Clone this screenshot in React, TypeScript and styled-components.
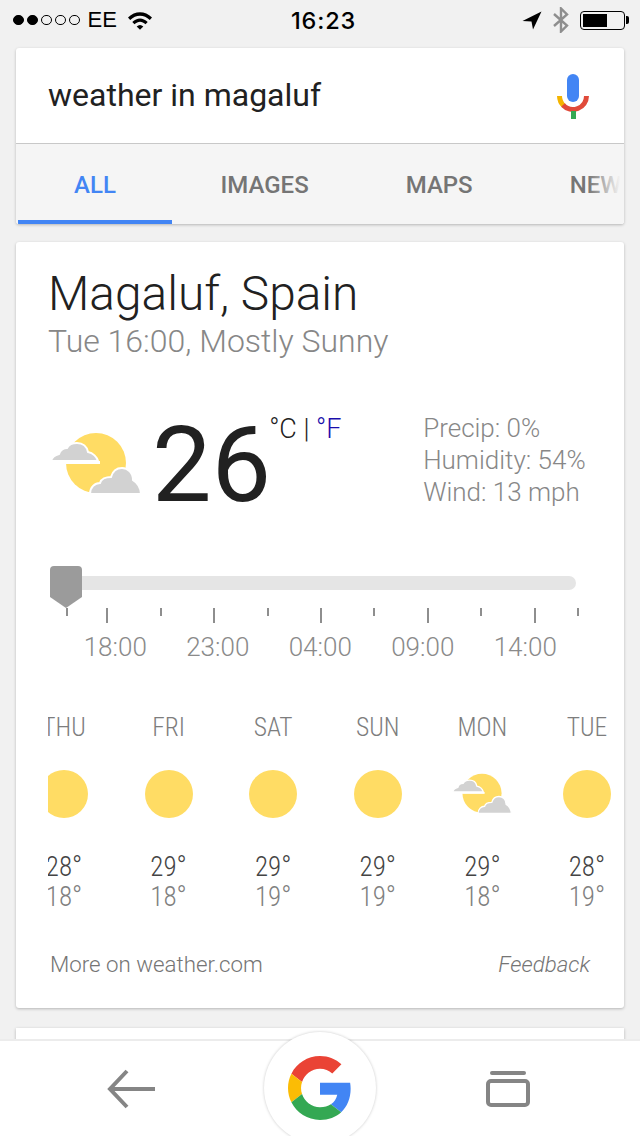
import { FC } from "react";
import styled, { createGlobalStyle } from "styled-components";

const tabs = ["ALL", "IMAGES", "MAPS", "NEWS"];
const details = ["Precip: 0%", "Humidity: 54%", "Wind: 13 mph"];
const hours = ["18:00", "23:00", "04:00", "09:00", "14:00"];
const ticks = [false, true, false, true, false, true, false, true, false, true, false];
const forecast = [
  { day: "THU", high: 28, low: 18, cloudy: false },
  { day: "FRI", high: 29, low: 18, cloudy: false },
  { day: "SAT", high: 29, low: 19, cloudy: false },
  { day: "SUN", high: 29, low: 19, cloudy: false },
  { day: "MON", high: 29, low: 18, cloudy: true },
  { day: "TUE", high: 28, low: 19, cloudy: false },
];

const PartlyCloudy: FC<{ width: number }> = ({ width }) => (
  <svg width={width} height={(width * 64) / 92} viewBox="0 0 92 64">
    <circle cx="46" cy="31" r="30" fill="#ffdc64" />
    <path
      d="M1 29C2 25 5 23 9 22C10 18 14 16 17 16C19 12 23 11 27 11C33 11 37 15 38 20C43 21 47 25 48 29Z"
      fill="#d2d2d2"
      stroke="#fff"
      strokeWidth="2"
    />
    <rect x="0" y="29" width="50" height="3" fill="#fff" />
    <path
      d="M40 62C40 55 45 51 50 51C51 47 56 45 61 45C63 38 68 36 72 36C78 36 83 41 83 48C87 50 91 56 91 62Z"
      fill="#d2d2d2"
      stroke="#fff"
      strokeWidth="2"
    />
  </svg>
);

const App: FC = () => {
  return (
    <Page>
      <GlobalStyle />
      <StatusBar>
        <StatusGroup>
          <Signal>
            <SignalDot filled />
            <SignalDot filled />
            <SignalDot />
            <SignalDot />
            <SignalDot />
          </Signal>
          <Carrier>EE</Carrier>
          <svg width="26" height="19" viewBox="0 0 26 19">
            <path d="M1 6.5C8 -0.5 18 -0.5 25 6.5L22.8 8.9C17 3.2 9 3.2 3.2 8.9Z" fill="#000" />
            <path d="M5.3 11C10 6.3 16 6.3 20.7 11L18.5 13.3C15 9.9 11 9.9 7.5 13.3Z" fill="#000" />
            <path d="M9.7 15.4C11.8 13.4 14.2 13.4 16.3 15.4L13 18.8Z" fill="#000" />
          </svg>
        </StatusGroup>
        <Time>16:23</Time>
        <StatusIcons>
          <svg width="20" height="19" viewBox="0 0 20 19">
            <path d="M19.5 0.5L0.5 10L9.5 10.5L11 18.5Z" fill="#000" />
          </svg>
          <svg width="16" height="26" viewBox="0 0 16 26" fill="none">
            <path d="M1 7L14 18.5L8 24.5V1.5L14 7.5L1 19" stroke="#8e8e8e" strokeWidth="2.4" />
          </svg>
          <Battery>
            <BatteryFill />
          </Battery>
        </StatusIcons>
      </StatusBar>

      <SearchCard>
        <SearchRow>
          <Query>weather in magaluf</Query>
          <svg width="32" height="46" viewBox="0 0 32 46" fill="none">
            <rect x="10" y="0" width="12" height="28" rx="6" fill="#4285f4" />
            <path d="M2.5 22A13.5 13.5 0 0 0 7 32" stroke="#f4b400" strokeWidth="5" />
            <path d="M6 31A13.5 13.5 0 0 0 29.5 22" stroke="#e04a3a" strokeWidth="5" />
            <rect x="14" y="37" width="5" height="8" fill="#34a853" />
          </svg>
        </SearchRow>
        <TabBar>
          {tabs.map((tab, index) => (
            <Tab key={tab} active={index === 0}>
              {tab}
            </Tab>
          ))}
          <TabFade />
        </TabBar>
      </SearchCard>

      <WeatherCard>
        <Place>Magaluf, Spain</Place>
        <Condition>Tue 16:00, Mostly Sunny</Condition>

        <Current>
          <PartlyCloudy width={92} />
          <Temperature>26</Temperature>
          <Units>
            °C | <UnitLink>°F</UnitLink>
          </Units>
          <Details>
            {details.map((line) => (
              <div key={line}>{line}</div>
            ))}
          </Details>
        </Current>

        <Slider>
          <Track />
          <Thumb width="32" height="42" viewBox="0 0 32 42">
            <path d="M4 0H28Q32 0 32 4V31L16 42L0 31V4Q0 0 4 0Z" fill="#9b9b9b" />
          </Thumb>
        </Slider>
        <Ticks>
          {ticks.map((long, index) => (
            <Tick key={index} long={long} />
          ))}
        </Ticks>
        <Hours>
          {hours.map((hour) => (
            <Hour key={hour}>{hour}</Hour>
          ))}
        </Hours>

        <ForecastClip>
          <Forecast>
            {forecast.map((item) => (
              <DayColumn key={item.day}>
                <DayName>{item.day}</DayName>
                <DayIcon>{item.cloudy ? <PartlyCloudy width={60} /> : <Sun />}</DayIcon>
                <High>{item.high}°</High>
                <Low>{item.low}°</Low>
              </DayColumn>
            ))}
          </Forecast>
        </ForecastClip>

        <CardFooter>
          <Source>More on weather.com</Source>
          <Feedback>Feedback</Feedback>
        </CardFooter>
      </WeatherCard>

      <NextCard />

      <BottomNav>
        <svg width="50" height="40" viewBox="0 0 50 40" fill="none">
          <path d="M48 20H3M20 2L3 20L20 38" stroke="#858585" strokeWidth="4" />
        </svg>
        <GoogleButton>
          <svg width="64" height="64" viewBox="0 0 48 48">
            <path fill="#EA4335" d="M24 9.5c3.54 0 6.71 1.22 9.21 3.6l6.85-6.85C35.9 2.38 30.47 0 24 0 14.62 0 6.51 5.38 2.56 13.22l7.98 6.19C12.43 13.72 17.74 9.5 24 9.5z" />
            <path fill="#4285F4" d="M46.98 24.55c0-1.57-.15-3.09-.38-4.55H24v9.02h12.94c-.58 2.96-2.26 5.48-4.78 7.18l7.73 6c4.51-4.18 7.09-10.36 7.09-17.65z" />
            <path fill="#FBBC05" d="M10.53 28.59c-.48-1.45-.76-2.99-.76-4.59s.27-3.14.76-4.59l-7.98-6.19C.92 16.46 0 20.12 0 24c0 3.88.92 7.54 2.56 10.78l7.97-6.19z" />
            <path fill="#34A853" d="M24 48c6.48 0 11.93-2.13 15.89-5.81l-7.73-6c-2.15 1.45-4.92 2.3-8.16 2.3-6.26 0-11.57-4.22-13.47-9.91l-7.98 6.19C6.51 42.62 14.62 48 24 48z" />
          </svg>
        </GoogleButton>
        <svg width="44" height="36" viewBox="0 0 44 36" fill="none">
          <path d="M6 2H38" stroke="#858585" strokeWidth="4" strokeLinecap="round" />
          <rect x="2" y="10" width="40" height="24" rx="3" stroke="#858585" strokeWidth="4" />
        </svg>
      </BottomNav>
    </Page>
  );
};

const GlobalStyle = createGlobalStyle`
  html, body {
    margin: 0;
    padding: 0;
    background: #f1f1f1;
  }
  * {
    box-sizing: border-box;
  }
`;

const Page = styled.div`
  position: relative;
  width: 640px;
  height: 1136px;
  overflow: hidden;
  background: #f1f1f1;
  font-family: Roboto, "Liberation Sans", sans-serif;
`;

const StatusBar = styled.div`
  display: grid;
  grid-template-columns: 1fr auto 1fr;
  align-items: center;
  height: 48px;
  padding: 0 11px 8px 13px;
`;

const StatusGroup = styled.div`
  display: flex;
  align-items: center;
`;

const Signal = styled.div`
  display: flex;
  gap: 3.5px;
`;

const SignalDot = styled.span<{ filled?: boolean }>`
  width: 10.5px;
  height: 10.5px;
  border-radius: 50%;
  border: 1px solid #000;
  background: ${({ filled }) => (filled ? "#000" : "transparent")};
`;

const Carrier = styled.span`
  margin: 0 10px 0 8px;
  font: 22px "Liberation Sans", sans-serif;
  color: #000;
`;

const Time = styled.span`
  margin-left: 5px;
  font: 500 23.5px Inter, sans-serif;
  letter-spacing: 0.8px;
  color: #000;
`;

const StatusIcons = styled.div`
  display: flex;
  align-items: center;
  justify-content: flex-end;
  gap: 11px;
`;

const Battery = styled.div`
  position: relative;
  width: 45px;
  height: 19px;
  margin-right: 4px;
  padding: 2px;
  border: 1px solid #000;
  border-radius: 4px;

  &::after {
    content: "";
    position: absolute;
    top: 4px;
    right: -5px;
    width: 3px;
    height: 8px;
    border-radius: 0 2px 2px 0;
    background: #000;
  }
`;

const BatteryFill = styled.div`
  width: 24px;
  height: 13px;
  background: #000;
`;

const SearchCard = styled.div`
  margin: 0 16px;
  height: 176px;
  border-radius: 3px;
  overflow: hidden;
  background: #fff;
  box-shadow: 0 1px 3px rgba(0, 0, 0, 0.25);
`;

const SearchRow = styled.div`
  display: flex;
  align-items: center;
  justify-content: space-between;
  height: 96px;
  padding: 3px 35px 0 32px;
  border-bottom: 1px solid #c8c8c8;
`;

const Query = styled.span`
  margin-bottom: 4px;
  font-size: 32px;
  color: #212121;
`;

const TabBar = styled.div`
  position: relative;
  display: flex;
  height: 80px;
  padding-left: 2px;
  overflow: hidden;
  background: #f5f5f5;
`;

const Tab = styled.div<{ active?: boolean }>`
  flex: none;
  min-width: 154px;
  padding: 27px 48.5px 0;
  text-align: center;
  font-size: 24px;
  font-weight: 500;
  color: ${({ active }) => (active ? "#4285f4" : "#757575")};
  border-bottom: 4px solid ${({ active }) => (active ? "#4285f4" : "transparent")};

  &:not(:first-child) {
    min-width: 0;
  }
`;

const TabFade = styled.div`
  position: absolute;
  top: 0;
  right: 0;
  width: 36px;
  height: 100%;
  background: linear-gradient(to right, rgba(245, 245, 245, 0), #f5f5f5 90%);
`;

const WeatherCard = styled.div`
  margin: 18px 16px 0;
  height: 766px;
  padding: 25px 0 0 32px;
  border-radius: 3px;
  background: #fff;
  box-shadow: 0 1px 3px rgba(0, 0, 0, 0.25);
`;

const Place = styled.div`
  font-size: 47.8px;
  font-weight: 300;
  line-height: 54px;
  color: #212121;
`;

const Condition = styled.div`
  margin-top: 2px;
  font-size: 32px;
  font-weight: 300;
  line-height: 36px;
  color: #878787;
`;

const Current = styled.div`
  display: flex;
  align-items: flex-start;
  height: 134px;
  margin: 73px 0 0 2px;
`;

const Temperature = styled.div`
  margin: -21px 0 0 10px;
  font-size: 106px;
  font-weight: 400;
  line-height: 108px;
  color: #212121;
`;

const Units = styled.div`
  width: 154px;
  margin: -18px 0 0 -2px;
  font-size: 27px;
  line-height: 30px;
  font-weight: 300;
  color: #212121;
`;

const UnitLink = styled.span`
  color: #1a0dab;
`;

const Details = styled.div`
  margin-top: -20px;
  font-size: 26px;
  font-weight: 300;
  line-height: 32px;
  color: #878787;
`;

const Slider = styled.div`
  position: relative;
  height: 42px;
  margin-left: 2px;
  width: 526px;
  padding-top: 10px;
`;

const Track = styled.div`
  height: 14px;
  border-radius: 0 7px 7px 0;
  background: #e5e5e5;
`;

const Thumb = styled.svg`
  position: absolute;
  top: 0;
  left: 0;
`;

const Ticks = styled.div`
  display: flex;
  align-items: flex-start;
  gap: 51.4px;
  padding-left: 18px;
  height: 15px;
`;

const Tick = styled.span<{ long?: boolean }>`
  width: 2px;
  height: ${({ long }) => (long ? "15px" : "8px")};
  background: #8e8e8e;

  &:first-child {
    margin-right: -13px;
  }
  &:last-child {
    margin-left: -10px;
  }
`;

const Hours = styled.div`
  display: flex;
  margin: 8px 0 0 16px;
`;

const Hour = styled.div`
  width: 102.5px;
  text-align: center;
  font-size: 26px;
  font-weight: 300;
  line-height: 32px;
  color: #8a8a8a;
`;

const ForecastClip = styled.div`
  margin-top: 48px;
  overflow: hidden;
`;

const Forecast = styled.div`
  display: flex;
  margin-left: -36.3px;
  width: 700px;
`;

const DayColumn = styled.div`
  display: flex;
  flex-direction: column;
  align-items: center;
  width: 104.6px;
`;

const DayName = styled.div`
  font-size: 25.5px;
  font-stretch: 85%;
  font-weight: 350;
  line-height: 32px;
  color: #7d7d7d;
`;

const DayIcon = styled.div`
  display: flex;
  align-items: center;
  justify-content: center;
  height: 48px;
  margin: 27px 0 34px;
`;

const Sun = styled.div`
  width: 48px;
  height: 48px;
  border-radius: 50%;
  background: #ffdc64;
`;

const High = styled.div`
  font-size: 27px;
  font-stretch: 85%;
  font-weight: 350;
  line-height: 30px;
  color: #444;
`;

const Low = styled.div`
  font-size: 27px;
  font-stretch: 85%;
  font-weight: 300;
  line-height: 30px;
  color: #808080;
`;

const CardFooter = styled.div`
  display: flex;
  justify-content: space-between;
  margin-top: 37px;
  padding: 0 34px 0 2px;
  font-size: 22.3px;
  font-weight: 300;
  line-height: 30px;
  color: #757575;
`;

const Source = styled.span``;

const Feedback = styled.span`
  font-style: italic;
`;

const NextCard = styled.div`
  margin: 20px 16px 0;
  height: 100px;
  background: #fff;
  box-shadow: 0 1px 3px rgba(0, 0, 0, 0.25);
`;

const BottomNav = styled.div`
  position: absolute;
  left: 0;
  right: 0;
  bottom: 0;
  display: flex;
  align-items: center;
  justify-content: space-between;
  height: 97px;
  padding: 0 110px 0 107px;
  border-top: 2px solid #ececec;
  background: #fff;
`;

const GoogleButton = styled.div`
  position: absolute;
  left: 264px;
  top: -9px;
  display: flex;
  align-items: center;
  justify-content: center;
  width: 112px;
  height: 112px;
  border-radius: 50%;
  background: #fff;
  box-shadow: 0 0 3px rgba(0, 0, 0, 0.22);
`;

export default App;
